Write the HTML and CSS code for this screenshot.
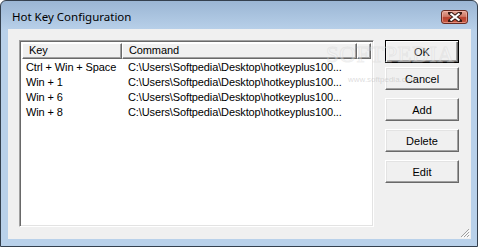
FILE: index.html
```html
<!DOCTYPE html>
<html lang="en">
  <head>
    <meta charset="UTF-8" />
    <title>Hot Key Configuration</title>
    <link rel="stylesheet" href="styles.css">
  </head>
  <body>
    <div id="window">
      <div id="titlebar">
        <span id="title">Hot Key Configuration</span>
        <button id="close-button">
          <svg width="14" height="10" viewBox="0 0 14 10">
            <path d="M2 1 L12 9 M12 1 L2 9" stroke="#3a1a14" stroke-width="4" stroke-linecap="square" />
            <path d="M2.5 1.5 L11.5 8.5 M11.5 1.5 L2.5 8.5" stroke="#fff" stroke-width="2.2" />
          </svg>
        </button>
      </div>
      <div id="client">
        <div id="list">
          <div class="list-header">
            <div class="col-key head-cell">Key</div>
            <div class="col-cmd head-cell">Command</div>
            <div class="head-rest head-cell"></div>
          </div>
          <div id="rows"></div>
        </div>
        <div id="button-column">
          <button class="dlg-button default">OK</button>
          <button class="dlg-button">Cancel</button>
          <button class="dlg-button spaced">Add</button>
          <button class="dlg-button spaced">Delete</button>
          <button class="dlg-button spaced">Edit</button>
        </div>
        <div id="watermark">
          <span class="wm-big">SOFTPEDIA</span>
          <span class="wm-small">www.softpedia.com</span>
        </div>
        <svg id="grip" width="11" height="11" viewBox="0 0 11 11">
          <path d="M10 2 L2 10 M10 5 L5 10 M10 8 L8 10" stroke="#a0a0a0" stroke-width="1" />
          <path d="M11 3 L3 11 M11 6 L6 11 M11 9 L9 11" stroke="#fff" stroke-width="1" />
        </svg>
      </div>
    </div>

    <script>
      const hotkeys = [
        ["Ctrl + Win + Space", "C:\\Users\\Softpedia\\Desktop\\hotkeyplus100..."],
        ["Win + 1", "C:\\Users\\Softpedia\\Desktop\\hotkeyplus100..."],
        ["Win + 6", "C:\\Users\\Softpedia\\Desktop\\hotkeyplus100..."],
        ["Win + 8", "C:\\Users\\Softpedia\\Desktop\\hotkeyplus100..."],
      ];

      const rows = document.getElementById("rows");
      hotkeys.forEach(([key, command]) => {
        const row = document.createElement("div");
        row.classList.add("row");
        const keyCell = document.createElement("div");
        keyCell.classList.add("col-key", "cell");
        keyCell.innerText = key;
        const cmdCell = document.createElement("div");
        cmdCell.classList.add("col-cmd", "cell");
        cmdCell.innerText = command;
        row.appendChild(keyCell);
        row.appendChild(cmdCell);
        rows.appendChild(row);
      });
    </script>
  </body>
</html>
```

FILE: styles.css
```css
body {
  margin: 0;
  width: 478px;
  height: 247px;
  overflow: hidden;
  font-family: "Liberation Sans", Arial, sans-serif;
  font-size: 11px;
  letter-spacing: -0.12px;
  background-color: #fff;
}

#window {
  width: 478px;
  height: 247px;
  box-sizing: border-box;
  border: 1px solid #34404e;
  border-radius: 6px 6px 0 0;
  background: linear-gradient(#9bb6d4, #b9d1ea 30px, #b9d1ea);
  display: flex;
  flex-direction: column;
}

#titlebar {
  height: 28px;
  box-sizing: border-box;
  padding: 3px 9px 0 11px;
  display: flex;
  align-items: center;
  justify-content: space-between;
}

#title {
  font-family: "Noto Sans", "Open Sans", sans-serif;
  font-size: 11.5px;
  letter-spacing: 0;
  color: #000;
}

#close-button {
  width: 27px;
  height: 14px;
  padding: 0;
  border: 1px solid #6b2b22;
  border-radius: 3px;
  background: linear-gradient(#e3a596, #d07966 45%, #b8412f 55%, #c6583f);
  box-shadow: inset 0 0 0 1px rgba(255, 200, 190, 0.5);
  display: flex;
  align-items: center;
  justify-content: center;
}

#client {
  flex-grow: 1;
  margin: 0 6px 7px 7px;
  background-color: #f0f0f0;
  padding: 11px 11px 0 11px;
  display: flex;
  position: relative;
}

#list {
  width: 355px;
  height: 187px;
  box-sizing: border-box;
  background-color: #fff;
  border: 1px solid;
  border-color: #a0a0a0 #fff #fff #a0a0a0;
  box-shadow: inset 1px 1px #696969, inset -1px -1px #e3e3e3;
  padding: 2px;
}

.list-header {
  display: flex;
  height: 16px;
}

.head-cell {
  box-sizing: border-box;
  background-color: #f0f0f0;
  border: 1px solid;
  border-color: #fff #696969 #696969 #fff;
  box-shadow: inset -1px -1px #a0a0a0;
  padding: 0 0 0 6px;
  line-height: 13px;
  color: #000;
}

.col-key {
  width: 100px;
}

.col-cmd {
  width: 235px;
}

.head-rest {
  flex-grow: 1;
}

#rows {
  padding-top: 1px;
}

.row {
  display: flex;
  height: 15px;
  line-height: 15px;
}

.cell {
  box-sizing: border-box;
  padding-left: 4px;
  white-space: nowrap;
  color: #000;
}

.row .col-cmd {
  padding-left: 6px;
}

#button-column {
  display: flex;
  flex-direction: column;
  margin-left: 11px;
  width: 74px;
}

.dlg-button {
  height: 23px;
  box-sizing: border-box;
  font-family: "Liberation Sans", Arial, sans-serif;
  font-size: 11px;
  color: #000;
  background-color: #f0f0f0;
  border: 1px solid;
  border-color: #fff #696969 #696969 #fff;
  box-shadow: inset -1px -1px #a0a0a0, inset 1px 1px #e3e3e3;
  padding: 0;
  margin-bottom: 4px;
}

.dlg-button.default {
  border: 1px solid #000;
  box-shadow: inset 1px 1px #fff, inset -1px -1px #696969, inset -2px -2px #a0a0a0;
}

.dlg-button.spaced {
  margin-top: 4px;
  margin-bottom: 4px;
}

#watermark {
  position: absolute;
  left: 318px;
  top: 13px;
  pointer-events: none;
  display: flex;
  flex-direction: column;
  align-items: flex-start;
}

.wm-big {
  font-family: "Liberation Serif", serif;
  font-size: 23px;
  letter-spacing: 0.5px;
  color: rgba(255, 255, 255, 0.3);
  -webkit-text-stroke: 1px rgba(200, 200, 200, 0.3);
}

.wm-small {
  font-size: 8px;
  letter-spacing: 0;
  margin: 7px 0 0 22px;
  color: rgba(170, 170, 170, 0.4);
}

#grip {
  position: absolute;
  right: 1px;
  bottom: 1px;
}
```
